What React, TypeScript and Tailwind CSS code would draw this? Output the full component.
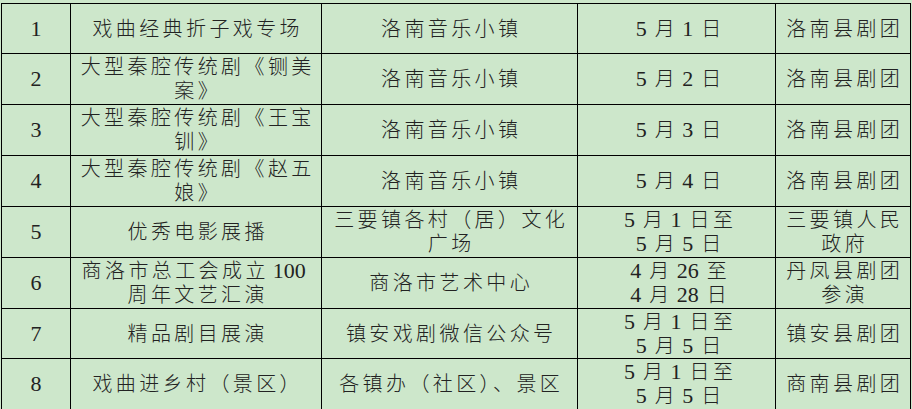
const rows = [
  { no: '1', name: ['戏曲经典折子戏专场'], place: ['洛南音乐小镇'], date: ['5月1日'], org: ['洛南县剧团'], h: 'h-[49px]' },
  { no: '2', name: ['大型秦腔传统剧《铡美', '案》'], place: ['洛南音乐小镇'], date: ['5月2日'], org: ['洛南县剧团'], h: 'h-[50px]' },
  { no: '3', name: ['大型秦腔传统剧《王宝', '钏》'], place: ['洛南音乐小镇'], date: ['5月3日'], org: ['洛南县剧团'], h: 'h-[50px]' },
  { no: '4', name: ['大型秦腔传统剧《赵五', '娘》'], place: ['洛南音乐小镇'], date: ['5月4日'], org: ['洛南县剧团'], h: 'h-[50px]' },
  { no: '5', name: ['优秀电影展播'], place: ['三要镇各村（居）文化', '广场'], date: ['5月1日至', '5月5日'], org: ['三要镇人民', '政府'], h: 'h-[50px]' },
  { no: '6', name: ['商洛市总工会成立100', '周年文艺汇演'], place: ['商洛市艺术中心'], date: ['4月26至', '4月28日'], org: ['丹凤县剧团', '参演'], h: 'h-[50px]' },
  { no: '7', name: ['精品剧目展演'], place: ['镇安戏剧微信公众号'], date: ['5月1日至', '5月5日'], org: ['镇安县剧团'], h: 'h-[49px]' },
  { no: '8', name: ['戏曲进乡村（景区）'], place: ['各镇办（社区）、景区'], date: ['5月1日至', '5月5日'], org: ['商南县剧团'], h: 'h-[50px]' },
]

// digits get their own span: serif, a bit larger, no tracking, spaced from the CJK text
function Line({ text }: { text: string }) {
  const parts = text.split(/(\d+)/).filter(Boolean)
  return (
    <div className="whitespace-nowrap leading-[24px] pl-[3.4px]">
      {parts.map((p, i) =>
        /^\d+$/.test(p) ? (
          <span key={i} className="text-[22px] tracking-normal ml-[4px] mr-[8px]">{p}</span>
        ) : (
          <span key={i} className="tracking-[3.4px]">{p}</span>
        )
      )}
    </div>
  )
}

function Cell({ lines, h }: { lines: string[]; h: string }) {
  return (
    <div className={`${h} bg-[#cde7cb] flex flex-col items-center justify-center`}>
      {lines.map((l, i) => (
        <Line key={i} text={l} />
      ))}
    </div>
  )
}

export default function App() {
  return (
    <div className="w-[912px] h-[409px] overflow-hidden bg-[#cde7cb] pt-[3px] pl-px text-[20px] font-light text-[#222] font-['Liberation_Serif','Noto_Sans_CJK_SC',serif]">
      <div className="w-[910px] bg-black p-px">
        <div className="grid grid-cols-[68px_250px_255px_197px_134px] gap-px">
          {rows.map((r) => (
            <div key={r.no} className="contents">
              <div className={`${r.h} bg-[#cde7cb] flex items-center justify-center text-[22px] leading-[24px]`}>
                {r.no}
              </div>
              <Cell lines={r.name} h={r.h} />
              <Cell lines={r.place} h={r.h} />
              <Cell lines={r.date} h={r.h} />
              <Cell lines={r.org} h={r.h} />
            </div>
          ))}
        </div>
      </div>
    </div>
  )
}
